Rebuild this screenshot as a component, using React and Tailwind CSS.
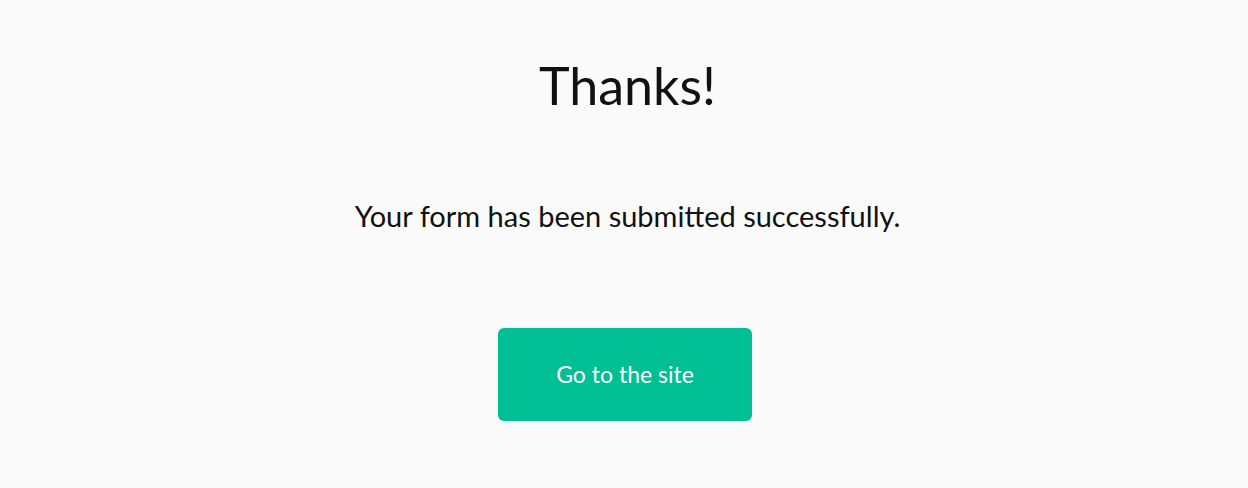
export default function App() {
  return (
    <div className="min-h-[488px] w-full bg-[#fafafa] flex flex-col items-center pt-[52px]" style={{ fontFamily: '"Source Sans Pro", Lato, "Noto Sans", sans-serif' }}>
      <h1 className="ml-[7px] text-[52px] leading-[66px] text-[#111111] font-normal">Thanks!</h1>
      <p className="mt-[80px] ml-[7px] text-[29px] leading-[36px] text-[#111111]">Your form has been submitted successfully.</p>
      <button className="mt-[94px] ml-[2px] w-[254px] h-[93px] rounded-[6px] bg-[#00bf94] text-white text-[23px]">Go to the site</button>
    </div>
  );
}
